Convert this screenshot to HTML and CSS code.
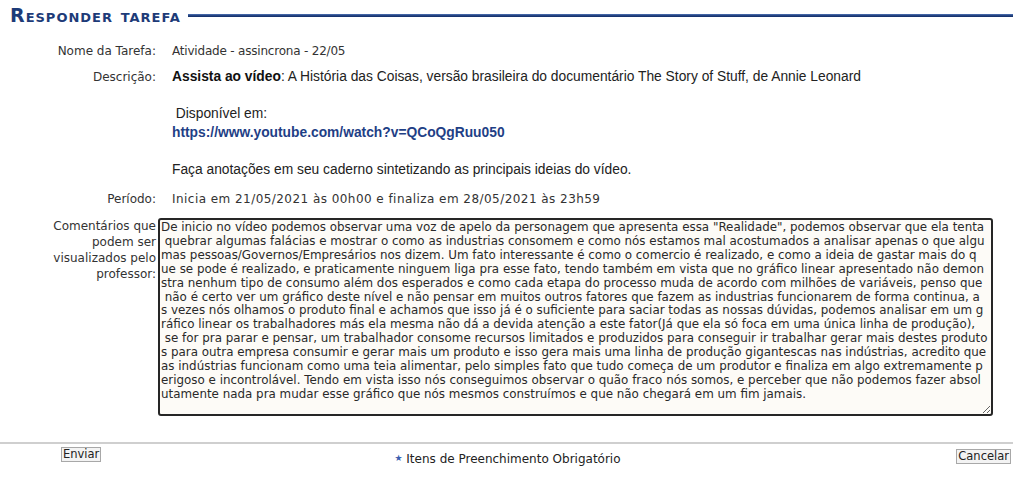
FILE: index.html
```html
<!DOCTYPE html>
<html lang="pt-BR">
<head>
<meta charset="utf-8">
<title>Responder tarefa</title>
<link rel="stylesheet" href="styles.css">
</head>
<body>
<div class="page">
  <div class="header">
    <h2 class="title">Responder tarefa</h2>
    <div class="title-line"></div>
  </div>

  <div class="row row-nome">
    <div class="lbl">Nome da Tarefa:</div>
    <div class="val val-nome">Atividade - assincrona - 22/05</div>
  </div>

  <div class="row row-desc">
    <div class="lbl lbl-desc">Descrição:</div>
    <div class="val desc">
      <p><strong>Assista ao vídeo</strong>: A História das Coisas, versão brasileira do documentário The Story of Stuff, de Annie Leonard</p>
      <p class="blank">&nbsp;</p>
      <p>&nbsp;Disponível em:</p>
      <p><a class="link" href="#">https://www.youtube.com/watch?v=QCoQgRuu050</a></p>
      <p class="blank">&nbsp;</p>
      <p>Faça anotações em seu caderno sintetizando as principais ideias do vídeo.</p>
    </div>
  </div>

  <div class="row row-periodo">
    <div class="lbl">Período:</div>
    <div class="val val-periodo">Inicia em 21/05/2021 às 00h00 e finaliza em 28/05/2021 às 23h59</div>
  </div>

  <div class="row row-coment">
    <div class="lbl lbl-coment">Comentários que<br>podem ser<br>visualizados pelo<br>professor:</div>
    <div class="val-area">
      <textarea class="comment" wrap="off">De inicio no vídeo podemos observar uma voz de apelo da personagem que apresenta essa "Realidade", podemos observar que ela tenta
 quebrar algumas falácias e mostrar o como as industrias consomem e como nós estamos mal acostumados a analisar apenas o que algu
mas pessoas/Governos/Empresários nos dizem. Um fato interessante é como o comercio é realizado, e como a ideia de gastar mais do q
ue se pode é realizado, e praticamente ninguem liga pra esse fato, tendo também em vista que no gráfico linear apresentado não demon
stra nenhum tipo de consumo além dos esperados e como cada etapa do processo muda de acordo com milhões de variáveis, penso que
 não é certo ver um gráfico deste nível e não pensar em muitos outros fatores que fazem as industrias funcionarem de forma continua, a
s vezes nós olhamos o produto final e achamos que isso já é o suficiente para saciar todas as nossas dúvidas, podemos analisar em um g
ráfico linear os trabalhadores más ela mesma não dá a devida atenção a este fator(Já que ela só foca em uma única linha de produção),
 se for pra parar e pensar, um trabalhador consome recursos limitados e produzidos para conseguir ir trabalhar gerar mais destes produto
s para outra empresa consumir e gerar mais um produto e isso gera mais uma linha de produção gigantescas nas indústrias, acredito que
as indústrias funcionam como uma teia alimentar, pelo simples fato que tudo começa de um produtor e finaliza em algo extremamente p
erigoso e incontrolável. Tendo em vista isso nós conseguimos observar o quão fraco nós somos, e perceber que não podemos fazer absol
utamente nada pra mudar esse gráfico que nós mesmos construímos e que não chegará em um fim jamais.</textarea>
    </div>
  </div>

  <div class="footer">
    <div class="foot-left"><button class="btn btn-enviar" type="button">Enviar</button></div>
    <div class="foot-mid"><span class="star">★</span> Itens de Preenchimento Obrigatório</div>
    <div class="foot-right"><button class="btn btn-cancelar" type="button">Cancelar</button></div>
  </div>
</div>
</body>
</html>
```

FILE: styles.css
```css
* { box-sizing: border-box; }

html, body {
  margin: 0;
  padding: 0;
  background: #ffffff;
}

body {
  font-family: "DejaVu Sans", Verdana, sans-serif;
  font-size: 12px;
  color: #2b2b2b;
}

.page {
  width: 1013px;
}

.header {
  display: flex;
  align-items: center;
  padding: 5px 0 0 10px;
  height: 25px;
}

.title {
  margin: 0;
  font-family: "DejaVu Sans", Verdana, sans-serif;
  font-size: 19px;
  font-weight: bold;
  font-variant: small-caps;
  line-height: 20px;
  color: #1d3b78;
  letter-spacing: 1px;
}

.title-line {
  flex: 1;
  height: 3px;
  margin-left: 7px;
  background: linear-gradient(#4f73b5, #1d3b78 60%, #14306a);
}

.row {
  display: flex;
  align-items: flex-start;
}

.lbl {
  width: 156px;
  flex: none;
  text-align: right;
  line-height: 16px;
  color: #333;
}

.val {
  flex: 1;
  margin-left: 2px;
  padding-left: 14px;
  line-height: 16px;
  color: #333;
}

.val-nome { letter-spacing: -0.2px; }
.val-periodo { letter-spacing: 0.45px; }

.row-nome { margin-top: 18px; }
.row-desc { margin-top: 9px; }
.row-periodo { margin-top: 12px; }
.row-coment { margin-top: 11px; }

.lbl-desc { padding-top: 1px; }

.desc {
  font-family: "Liberation Sans", Arial, sans-serif;
  font-size: 13.8px;
  line-height: 18.5px;
  color: #222;
}

.desc p { margin: 0; }

.desc strong { color: #111; }

.link {
  color: #1f3f86;
  font-weight: bold;
  text-decoration: none;
}

.val-area {
  margin-left: 2px;
}

.comment {
  display: block;
  width: 835px;
  height: 198px;
  margin: 0;
  padding: 1px 1px;
  border: 2px solid #262626;
  border-radius: 3px;
  background: #fdfbf7;
  font-family: "DejaVu Sans", Verdana, sans-serif;
  font-size: 11.9px;
  line-height: 13.9px;
  color: #2a2a2a;
  white-space: pre;
  overflow: hidden;
  resize: both;
}

.footer {
  display: grid;
  grid-template-columns: 1fr auto 1fr;
  align-items: start;
  margin-top: 26px;
  border-top: 2px solid #cfcfcf;
  height: 48px;
}

.foot-left { padding-left: 61px; padding-top: 3px; }

.foot-mid {
  padding-top: 6px;
  color: #222;
  line-height: 16px;
  padding-left: 2px;
}

.star {
  display: inline-block;
  color: #3b5fb0;
  font-size: 9px;
  vertical-align: 2px;
}

.foot-right {
  justify-self: end;
  padding-top: 5px;
  padding-right: 2px;
}

.btn {
  font-family: "DejaVu Sans", Verdana, sans-serif;
  font-size: 11.5px;
  line-height: 13px;
  color: #222;
  background: #f3f3f3;
  border: 1px solid #a8a8a8;
  border-radius: 0;
  padding: 0 1px;
  margin: 0;
}
```
